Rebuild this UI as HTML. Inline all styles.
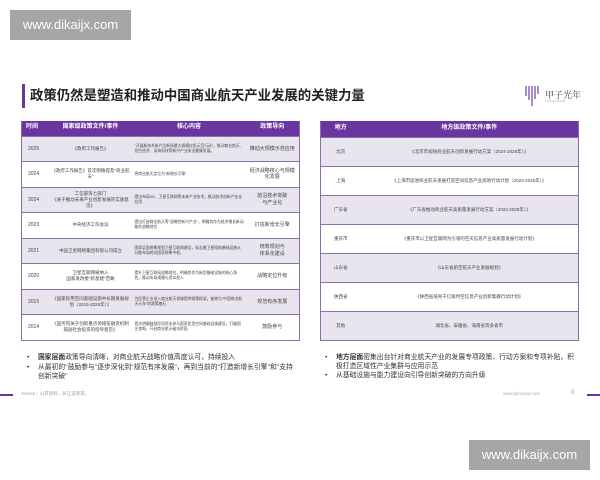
<!DOCTYPE html>
<html><head><meta charset="utf-8"><style>
*{margin:0;padding:0;box-sizing:border-box}
body{width:600px;height:480px;background:#fff;position:relative;overflow:hidden;font-family:"Liberation Sans","Noto Sans CJK SC",sans-serif;color:#333}
.wm{position:absolute;background:#a6a6a6;color:#fff;font-size:13px;line-height:30px;text-align:center;width:121px;height:30px}
.a{position:absolute}
table{position:absolute;border-collapse:collapse;table-layout:fixed}
td,th{font-size:4.5px;text-align:center;color:#444;border-bottom:1px solid #8a70a8;padding:0 2px;line-height:1.3}
th{background:#6b35a0;color:#fff;font-size:6px;font-weight:bold;height:15px}
.l tr.g td,.r tr.g td{background:#e9e5ef}
.l td{height:25.5px}
.r td{height:29px}
td.t{text-align:left;padding-left:6px;font-size:5px}
td.c{text-align:left;font-size:3.8px}
td.o{font-size:5px}
table{border-left:1px solid #8a70a8;border-right:1px solid #8a70a8}
.b{position:absolute;font-size:6.8px;color:#333;line-height:8.5px}
.b span{position:absolute;left:-11px}
</style></head><body>
<div class="wm" style="left:10px;top:10px">www.dikaijx.com</div>
<div class="wm" style="left:469px;top:440px">www.dikaijx.com</div>
<div class="a" style="left:22px;top:84px;width:3px;height:24px;background:#6b35a0"></div>
<div class="a" style="left:30px;top:84px;font-size:13.4px;font-weight:bold;color:#222;line-height:24px">政策仍然是塑造和推动中国商业航天产业发展的关键力量</div>
<svg class="a" style="left:524px;top:84px" width="16" height="24"><g stroke="#7a4aa8" stroke-width="1.3"><line x1="2" y1="2" x2="2" y2="12"/><line x1="5" y1="2" x2="5" y2="16"/><line x1="8" y1="2" x2="8" y2="22"/><line x1="11" y1="2" x2="11" y2="15"/><line x1="14" y1="2" x2="14" y2="10"/></g></svg>
<div class="a" style="left:545px;top:88px;font-size:9px;color:#444;font-family:'Noto Serif CJK SC',serif">甲子光年</div>
<div class="a" style="left:545px;top:100px;font-size:2.5px;color:#888;letter-spacing:1px">JAZZYEAR</div>

<table class="l" style="left:21px;top:121px;width:278px">
<colgroup><col style="width:27px"><col style="width:84px"><col style="width:113px"><col style="width:54px"></colgroup>
<tr><th style="text-align:left;padding-left:4px">时间</th><th>国家级政策文件/事件</th><th>核心内容</th><th>政策导向</th></tr>
<tr class="g"><td class="t">2025</td><td>《政府工作报告》</td><td class="c">"开展新技术新产品新场景大规模应用示范行动"，推动商业航天、低空经济、深海科技等新兴产业安全健康发展。</td><td class="o">推动大规模示范应用</td></tr>
<tr><td class="t">2024</td><td>《政府工作报告》首次明确提及"商业航天"</td><td class="c">将商业航天定位为"新增长引擎"</td><td class="o">经济战略核心与规模化发展</td></tr>
<tr class="g"><td class="t">2024</td><td>工信部等七部门<br>《关于推动未来产业创新发展的实施意见》</td><td class="c">提出布局6G、卫星互联网等未来产业技术，推动技术创新产业化应用</td><td class="o">前沿技术突破<br>与产业化</td></tr>
<tr><td class="t">2023</td><td>中央经济工作会议</td><td class="c">提出打造商业航天等"战略性新兴产业"，明确其作为经济增长新动能的战略地位</td><td class="o">打造新增长引擎</td></tr>
<tr class="g"><td class="t">2021</td><td>中国卫星网络集团有限公司成立</td><td class="c">国家层面统筹规划卫星互联网建设，标志着卫星网络基础设施从分散布局转向国家统筹中枢。</td><td class="o">统筹规划与<br>体系化建设</td></tr>
<tr><td class="t">2020</td><td>卫星互联网被纳入<br>国家发改委"新基建"范畴</td><td class="c">提升卫星互联网战略地位，明确其作为新型基础设施的核心角色，推动市场规模与资本投入</td><td class="o">战略定位升级</td></tr>
<tr class="g"><td class="t">2015</td><td>《国家民用空间基础设施中长期发展规划（2015-2025年）》</td><td class="c">为民营企业进入商业航天领域提供政策框架，被称为"中国商业航天元年"的政策基石</td><td class="o">规范有序发展</td></tr>
<tr><td class="t">2014</td><td>《国务院关于创新重点领域投融资机制鼓励社会投资的指导意见》</td><td class="c">首次明确鼓励民间资本参与国家民用空间基础设施建设，打破国企垄断，开启商业航天破冰阶段</td><td class="o">鼓励参与</td></tr>
</table>

<table class="r" style="left:320px;top:121px;width:258px">
<colgroup><col style="width:40px"><col style="width:218px"></colgroup>
<tr><th style="height:16px">地方</th><th>地方级政策文件/事件</th></tr>
<tr class="g"><td>北京</td><td>《北京市加快商业航天创新发展行动方案（2024-2028年）》</td></tr>
<tr><td>上海</td><td>《上海市促进商业航天发展打造空间信息产业高地行动计划（2023-2025年）》</td></tr>
<tr class="g"><td>广东省</td><td>《广东省推动商业航天高质量发展行动方案（2024-2028年）》</td></tr>
<tr><td>重庆市</td><td>《重庆市以卫星互联网为引领的空天信息产业高质量发展行动计划》</td></tr>
<tr class="g"><td>山东省</td><td>《山东省航空航天产业发展规划》</td></tr>
<tr><td>陕西省</td><td>《陕西省培育千亿级时空信息产业创新集群行动计划》</td></tr>
<tr class="g"><td>其他</td><td>湖北省、安徽省、海南省等多省市</td></tr>
</table>

<div class="b" style="left:38px;top:354px;width:260px"><span>•</span><b>国家层面</b>政策导向清晰，对商业航天战略价值高度认可，持续投入</div>
<div class="b" style="left:38px;top:364px;width:256px"><span>•</span>从最初的"鼓励参与"逐步深化到"规范有序发展"，再到当前的"打造新增长引擎"和"支持创新突破"</div>
<div class="b" style="left:336px;top:354px;width:240px"><span>•</span><b>地方层面</b>密集出台针对商业航天产业的发展专项政策、行动方案和专项补贴，积极打造区域性产业集群与应用示范</div>
<div class="b" style="left:336px;top:372px;width:240px"><span>•</span>从基础设施与能力建设向引导创新突破的方向升级</div>

<div class="a" style="left:0;top:394px;width:13px;height:1.5px;background:#6b35a0"></div>
<div class="a" style="left:21px;top:391px;font-size:4.5px;color:#999">Source：公开资料，长江证券等。</div>
<div class="a" style="left:503px;top:391px;font-size:4.5px;color:#aaa">www.jazzyear.com</div>
<div class="a" style="left:571px;top:390px;font-size:6px;color:#aaa">8</div>
<div class="a" style="left:587px;top:394px;width:13px;height:1.5px;background:#6b35a0"></div>
</body></html>
